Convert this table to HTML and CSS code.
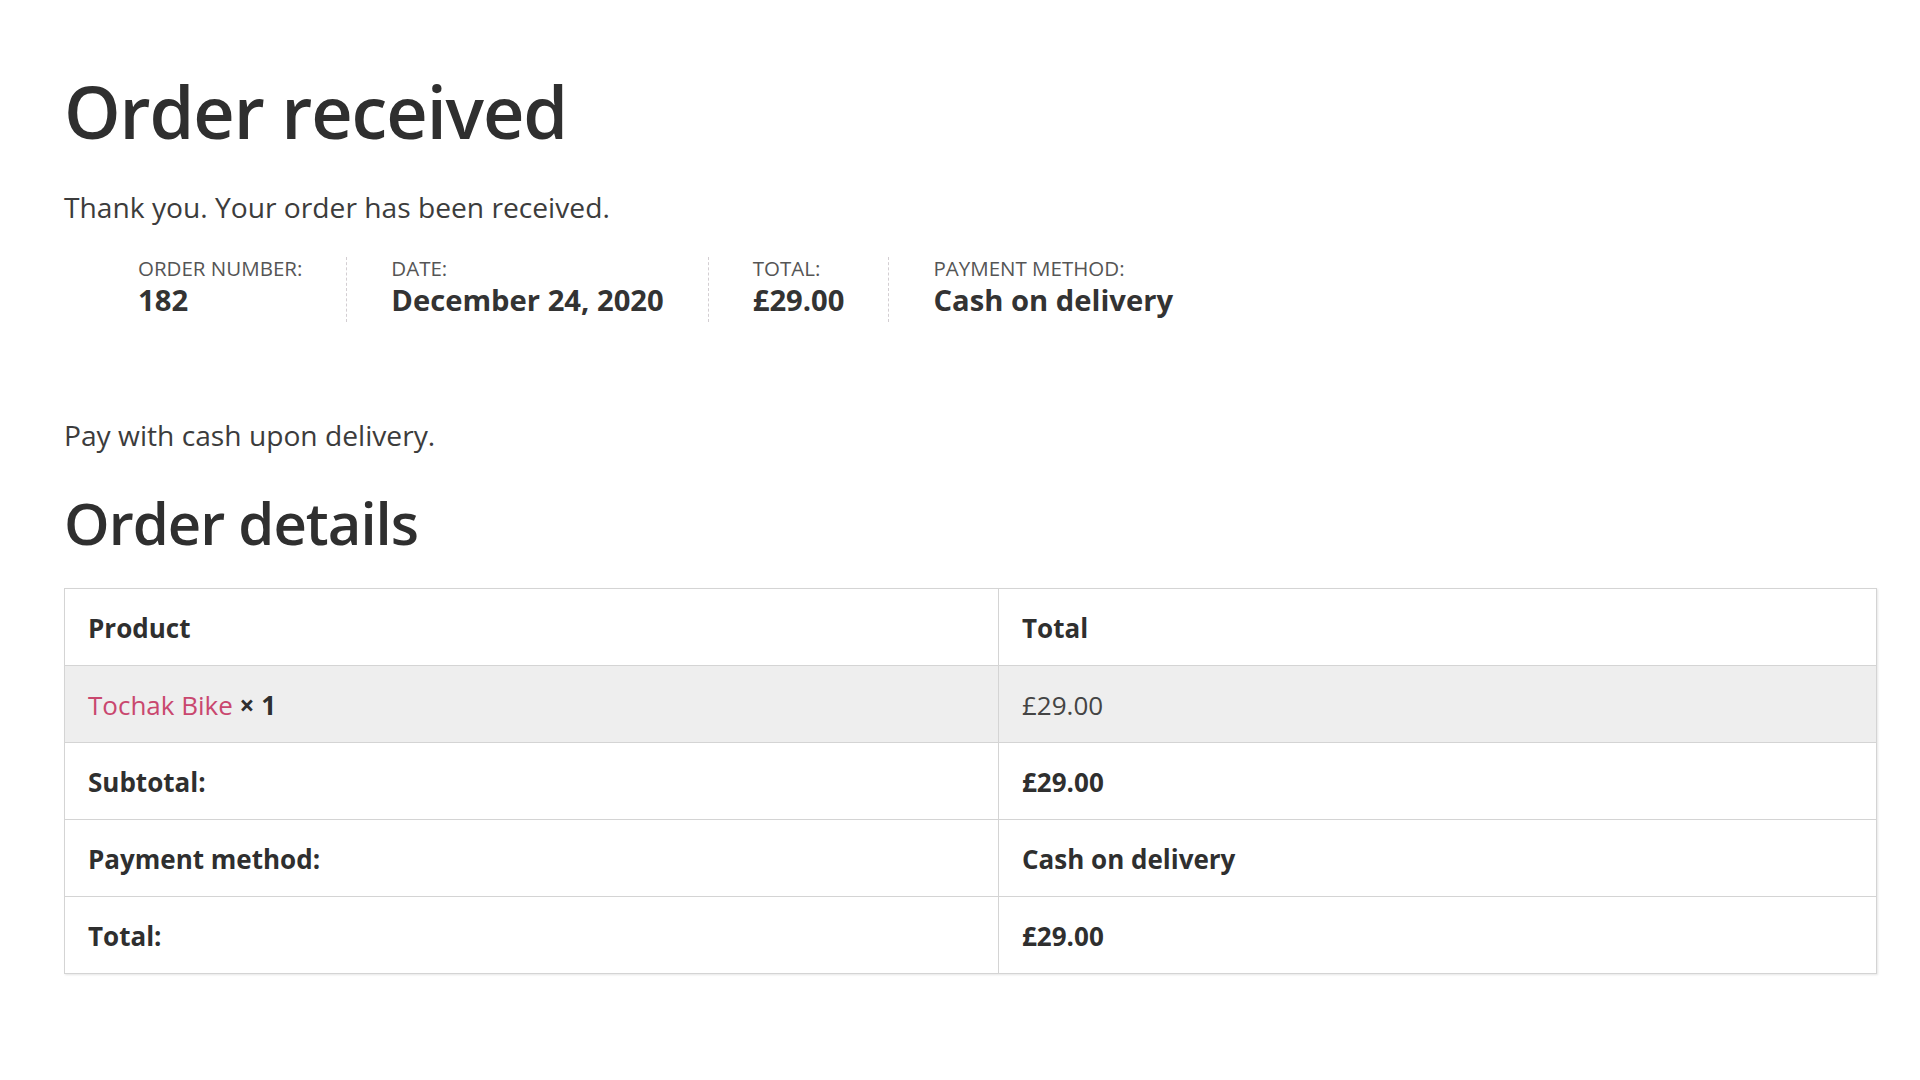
FILE: index.html
```html
<!DOCTYPE html>
<html lang="en">
<head>
<meta charset="utf-8">
<title>Order received</title>
<link rel="stylesheet" href="styles.css">
</head>
<body>
<main class="page">
  <h1 class="title">Order received</h1>
  <p class="notice">Thank you. Your order has been received.</p>
  <ul class="overview">
    <li class="overview-item">Order number:<strong>182</strong></li>
    <li class="overview-item">Date:<strong>December 24, 2020</strong></li>
    <li class="overview-item">Total:<strong>£29.00</strong></li>
    <li class="overview-item overview-last">Payment method:<strong>Cash on delivery</strong></li>
  </ul>
  <p class="instructions">Pay with cash upon delivery.</p>
  <h2 class="subtitle">Order details</h2>
  <table class="details">
    <colgroup><col class="col-product"><col class="col-total"></colgroup>
    <thead>
      <tr><th>Product</th><th>Total</th></tr>
    </thead>
    <tbody>
      <tr class="item-row">
        <td><a class="product-link" href="#">Tochak Bike</a> <strong class="qty">× 1</strong></td>
        <td>£29.00</td>
      </tr>
    </tbody>
    <tfoot>
      <tr><th>Subtotal:</th><td class="strong-cell">£29.00</td></tr>
      <tr><th>Payment method:</th><td class="strong-cell">Cash on delivery</td></tr>
      <tr><th>Total:</th><td class="strong-cell">£29.00</td></tr>
    </tfoot>
  </table>
</main>
</body>
</html>
```
FILE: styles.css
```css
html, body {
  margin: 0;
  padding: 0;
  background: #ffffff;
}
body {
  font-family: "Open Sans", "Noto Sans", sans-serif;
  color: #3c3c3c;
  font-size: 28px;
}
.page {
  padding: 68px 43px 60px 64px;
}
.title {
  margin: 0;
  font-size: 72px;
  line-height: 86px;
  font-weight: 600;
  letter-spacing: -1.1px;
  color: #2f2f2f;
}
.notice {
  margin: 32px 0 0;
  font-size: 28.2px;
  line-height: 42px;
}
.overview {
  list-style: none;
  margin: 29px 0 0;
  padding: 0 0 0 74px;
  display: flex;
}
.overview-item {
  font-size: 20.5px;
  line-height: 22px;
  text-transform: uppercase;
  color: #555;
  padding-right: 44px;
  margin-right: 44px;
  border-right: 1px dashed #d3ced2;
}
.overview-last {
  border-right: 0;
}
.overview-item strong {
  display: block;
  font-size: 29.2px;
  line-height: 43px;
  text-transform: none;
  font-weight: 700;
  color: #333;
}
.instructions {
  margin: 92px 0 0;
  font-size: 28.2px;
  line-height: 42px;
}
.subtitle {
  margin: 30px 0 0;
  font-size: 58px;
  line-height: 74px;
  font-weight: 600;
  letter-spacing: -1px;
  color: #2f2f2f;
}
.details {
  margin-top: 28px;
  width: 100%;
  border-collapse: collapse;
  border: 1px solid #d4d4d4;
  box-shadow: 1px 1px 2px rgba(0,0,0,0.1);
  font-size: 26px;
  line-height: 40px;
}
.col-product { width: 934px; }
.details th,
.details td {
  border: 1px solid #d4d4d4;
  padding: 19px 23px 17px;
  text-align: left;
  vertical-align: middle;
}
.details th {
  font-weight: 700;
  color: #2f2f2f;
}
.details td {
  color: #444;
}
.item-row td {
  background: #eeeeee;
}
.product-link {
  color: #c9476e;
  text-decoration: none;
}
.qty {
  font-weight: 700;
  color: #2f2f2f;
}
.details .strong-cell {
  font-weight: 700;
  color: #2f2f2f;
}
```
